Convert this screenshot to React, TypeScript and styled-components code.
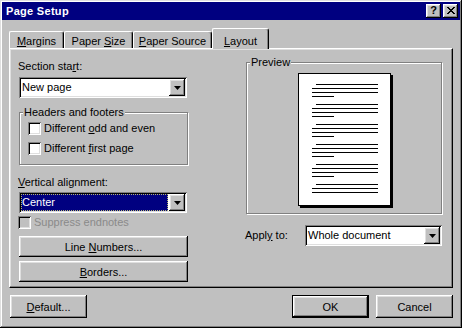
import React from 'react';
import styled, { createGlobalStyle, css } from 'styled-components';

const GlobalStyle = createGlobalStyle`
  html, body {
    margin: 0;
    padding: 0;
    background: #c0c0c0;
  }
  body {
    font-family: "Liberation Sans", Arial, sans-serif;
    font-size: 11px;
    color: #000;
  }
  * {
    box-sizing: border-box;
  }
`;

const raised = css`
  background: #c0c0c0;
  box-shadow: inset -1px -1px #000, inset 1px 1px #fff, inset -2px -2px #808080, inset 2px 2px #dfdfdf;
`;

const sunken = css`
  box-shadow: inset 1px 1px #808080, inset -1px -1px #fff, inset 2px 2px #000, inset -2px -2px #dfdfdf;
`;

const Window = styled.div`
  width: 462px;
  height: 328px;
  padding: 2px;
  background: #c0c0c0;
  box-shadow: inset -1px -1px #000, inset 1px 1px #dfdfdf, inset -2px -2px #808080, inset 2px 2px #fff;
  display: flex;
  flex-direction: column;
`;

const TitleBar = styled.div`
  height: 18px;
  background: #000080;
  color: #fff;
  display: flex;
  align-items: center;
  padding: 0 2px 0 4px;
`;

const TitleText = styled.div`
  flex: 1;
  font-weight: bold;
  font-size: 11px;
  letter-spacing: 0.3px;
`;

const TitleButtons = styled.div`
  display: flex;
  gap: 2px;
`;

const TitleButton = styled.div`
  ${raised};
  width: 15px;
  height: 14px;
  display: flex;
  align-items: center;
  justify-content: center;
  color: #000;
  font-weight: bold;
  font-size: 11px;
  line-height: 11px;
  padding-bottom: 1px;
`;

const TabRow = styled.div`
  position: relative;
  z-index: 2;
  margin-top: 8px;
  padding-left: 7px;
  height: 20px;
  display: flex;
  align-items: flex-end;
`;

const Tab = styled.div<{ $w: number; $active?: boolean }>`
  width: ${(p) => p.$w}px;
  height: ${(p) => (p.$active ? 21 : 17)}px;
  margin-bottom: ${(p) => (p.$active ? -1 : 0)}px;
  padding-top: ${(p) => (p.$active ? 6 : 3)}px;
  background: #c0c0c0;
  border-top: 1px solid #fff;
  border-left: 1px solid #fff;
  border-right: 1px solid #000;
  border-radius: 2px 3px 0 0;
  box-shadow: inset -1px 0 #808080;
  text-align: center;
  line-height: 13px;
  white-space: nowrap;
`;

const Panel = styled.div`
  position: relative;
  z-index: 1;
  width: 444px;
  height: 240px;
  margin-left: 7px;
  border-top: 1px solid #fff;
  border-left: 1px solid #fff;
  border-right: 1px solid #000;
  border-bottom: 1px solid #000;
  box-shadow: inset -1px -1px #808080, inset 1px 1px #dfdfdf;
  padding: 11px 0 0 8px;
  display: grid;
  grid-template-columns: 170px 197px;
  column-gap: 57px;
  align-items: start;
`;

const Column = styled.div`
  display: flex;
  flex-direction: column;
`;

const FieldLabel = styled.div<{ $mt?: number }>`
  margin-top: ${(p) => p.$mt ?? 0}px;
  height: 13px;
  line-height: 13px;
  white-space: nowrap;
`;

const Select = styled.div<{ $w: number; $mt?: number; $ml?: number }>`
  ${sunken};
  width: ${(p) => p.$w}px;
  height: 21px;
  margin-top: ${(p) => p.$mt ?? 0}px;
  margin-left: ${(p) => p.$ml ?? 0}px;
  background: #fff;
  padding: 2px;
  display: flex;
`;

const SelectValue = styled.div<{ $selected?: boolean }>`
  flex: 1;
  padding-left: 1px;
  line-height: 17px;
  white-space: nowrap;
  ${(p) =>
    p.$selected &&
    css`
      background: #000080;
      color: #fff;
      outline: 1px dotted #b8b870;
      outline-offset: -1px;
      margin-right: 1px;
    `}
`;

const DropButton = styled.div`
  ${raised};
  width: 16px;
  height: 17px;
  display: flex;
  align-items: center;
  justify-content: center;
`;

const GroupBox = styled.div<{ $w: number; $h: number; $mt?: number }>`
  position: relative;
  width: ${(p) => p.$w}px;
  height: ${(p) => p.$h}px;
  margin-top: ${(p) => p.$mt ?? 0}px;
  margin-left: 1px;
  border: 1px solid #808080;
  box-shadow: inset 1px 1px #fff, 1px 1px #fff;
`;

const GroupLegend = styled.div`
  position: absolute;
  top: -7px;
  left: 3px;
  padding: 0 1px;
  background: #c0c0c0;
  line-height: 13px;
  white-space: nowrap;
`;

const CheckList = styled.div`
  display: flex;
  flex-direction: column;
  gap: 7px;
  padding: 9px 0 0 8px;
`;

const CheckRow = styled.div<{ $mt?: number; $disabled?: boolean }>`
  display: flex;
  align-items: center;
  gap: 3px;
  height: 13px;
  line-height: 13px;
  margin-top: ${(p) => p.$mt ?? 0}px;
  white-space: nowrap;
  color: ${(p) => (p.$disabled ? '#8a8a8a' : '#000')};
`;

const CheckBox = styled.div<{ $disabled?: boolean }>`
  ${sunken};
  width: 13px;
  height: 13px;
  flex: none;
  background: ${(p) => (p.$disabled ? '#c0c0c0' : '#fff')};
`;

const Button = styled.div<{ $w: number; $h: number; $mt?: number; $ml?: number; $default?: boolean }>`
  ${raised};
  width: ${(p) => p.$w}px;
  height: ${(p) => p.$h}px;
  margin-top: ${(p) => p.$mt ?? 0}px;
  margin-left: ${(p) => p.$ml ?? 0}px;
  display: flex;
  align-items: center;
  justify-content: center;
  white-space: nowrap;
  ${(p) =>
    p.$default &&
    css`
      border: 1px solid #000;
    `}
`;

const PreviewBody = styled.div`
  display: flex;
  justify-content: center;
  padding-top: 10px;
`;

const Page = styled.div`
  width: 93px;
  height: 133px;
  background: #fff;
  border: 1px solid #000;
  box-shadow: 2px 2px 0 #000;
`;

const ApplyRow = styled.div`
  display: flex;
  align-items: center;
  margin-top: 11px;
`;

const ApplyLabel = styled.div`
  width: 60px;
  line-height: 13px;
`;

const Footer = styled.div`
  display: flex;
  align-items: center;
  margin-top: 7px;
  padding: 0 7px 0 8px;
  gap: 7px;
`;

const Spacer = styled.div`
  flex: 1;
`;

const Arrow = () => (
  <svg width="7" height="4" viewBox="0 0 7 4">
    <polygon points="0,0 7,0 3.5,4" fill="#000" />
  </svg>
);

const CloseGlyph = () => {
  const rows = [0, 1, 2, 3, 4, 5, 6];
  return (
    <svg width="8" height="7" viewBox="0 0 8 7" shapeRendering="crispEdges">
      {rows.map((i) => (
        <React.Fragment key={i}>
          <rect x={i} y={i} width="2" height="1" fill="#000" />
          <rect x={6 - i} y={i} width="2" height="1" fill="#000" />
        </React.Fragment>
      ))}
    </svg>
  );
};

const PageLines = () => {
  const rects: React.ReactNode[] = [];
  for (let k = 0; k < 6; k++) {
    const y0 = 10 + 20 * k;
    rects.push(<rect key={`a${k}`} x={17} y={y0} width={62} height={1} />);
    rects.push(<rect key={`b${k}`} x={13} y={y0 + 4} width={66} height={1} />);
    rects.push(<rect key={`c${k}`} x={13} y={y0 + 8} width={66} height={1} />);
    if (k < 5) rects.push(<rect key={`d${k}`} x={13} y={y0 + 12} width={22} height={1} />);
  }
  return (
    <svg width="91" height="131" viewBox="0 0 91 131" shapeRendering="crispEdges" fill="#000">
      {rects}
    </svg>
  );
};

const SelectBox: React.FC<{ w: number; mt?: number; ml?: number; selected?: boolean; children: React.ReactNode }> = ({
  w,
  mt,
  ml,
  selected,
  children,
}) => (
  <Select $w={w} $mt={mt} $ml={ml}>
    <SelectValue $selected={selected}>{children}</SelectValue>
    <DropButton>
      <Arrow />
    </DropButton>
  </Select>
);

const App: React.FC = () => {
  return (
    <>
      <GlobalStyle />
      <Window>
        <TitleBar>
          <TitleText>Page Setup</TitleText>
          <TitleButtons>
            <TitleButton>?</TitleButton>
            <TitleButton>
              <CloseGlyph />
            </TitleButton>
          </TitleButtons>
        </TitleBar>

        <TabRow>
          <Tab $w={55}>
            <u>M</u>argins
          </Tab>
          <Tab $w={69}>
            Paper <u>S</u>ize
          </Tab>
          <Tab $w={79}>
            <u>P</u>aper Source
          </Tab>
          <Tab $w={57} $active>
            <u>L</u>ayout
          </Tab>
        </TabRow>

        <Panel>
          <Column>
            <FieldLabel>
              Section sta<u>r</u>t:
            </FieldLabel>
            <SelectBox w={168} mt={4} ml={1}>
              New page
            </SelectBox>

            <GroupBox $w={169} $h={53} $mt={14}>
              <GroupLegend>Headers and footers</GroupLegend>
              <CheckList>
                <CheckRow>
                  <CheckBox />
                  <span>
                    Different <u>o</u>dd and even
                  </span>
                </CheckRow>
                <CheckRow>
                  <CheckBox />
                  <span>
                    Different <u>f</u>irst page
                  </span>
                </CheckRow>
              </CheckList>
            </GroupBox>

            <FieldLabel $mt={11}>
              <u>V</u>ertical alignment:
            </FieldLabel>
            <SelectBox w={168} mt={3} ml={1} selected>
              Center
            </SelectBox>

            <CheckRow $mt={3} $disabled>
              <CheckBox $disabled />
              <span>Suppress endnotes</span>
            </CheckRow>

            <Button $w={169} $h={21} $mt={7} $ml={1}>
              <span>
                Line <u>N</u>umbers...
              </span>
            </Button>
            <Button $w={169} $h={21} $mt={4} $ml={1}>
              <span>
                <u>B</u>orders...
              </span>
            </Button>
          </Column>

          <Column>
            <GroupBox $w={196} $h={152} $mt={2}>
              <GroupLegend>Preview</GroupLegend>
              <PreviewBody>
                <Page>
                  <PageLines />
                </Page>
              </PreviewBody>
            </GroupBox>

            <ApplyRow>
              <ApplyLabel>
                Appl<u>y</u> to:
              </ApplyLabel>
              <SelectBox w={137}>Whole document</SelectBox>
            </ApplyRow>
          </Column>
        </Panel>

        <Footer>
          <Button $w={77} $h={23}>
            <span>
              <u>D</u>efault...
            </span>
          </Button>
          <Spacer />
          <Button $w={77} $h={23} $default>
            OK
          </Button>
          <Button $w={77} $h={23}>
            Cancel
          </Button>
        </Footer>
      </Window>
    </>
  );
};

export default App;
